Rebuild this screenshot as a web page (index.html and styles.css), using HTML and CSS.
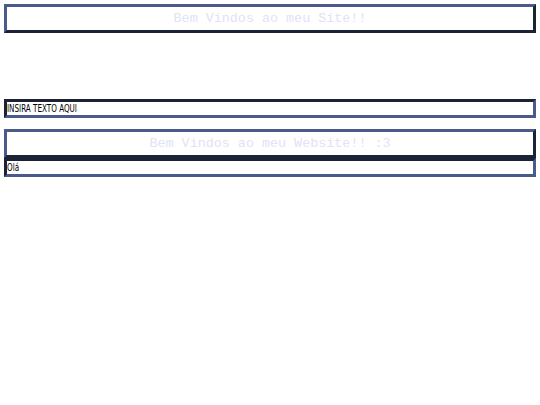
FILE: index.html
```html
<!DOCTYPE html>
<html>
<head>
<meta charset="utf-8">
<link rel="stylesheet" href="styles.css">
</head>
<body>
<div class="title">Bem Vindos ao meu Site!!</div>
<div class="spacer"></div>
<div class="field"><span class="label">INSIRA TEXTO AQUI</span></div>
<div class="title second">Bem Vindos ao meu Website!! :3</div>
<div class="field"><span class="label">Olá</span></div>
</body>
</html>
```
FILE: styles.css
```css
html, body {
  margin: 0;
  padding: 0;
  background: #ffffff;
}
body {
  padding: 4px;
}
.title {
  border: 3px outset #4a5a8a;
  height: 23px;
  line-height: 23px;
  text-align: center;
  font-family: "Liberation Mono", "DejaVu Sans Mono", monospace;
  font-size: 13.4px;
  color: #e2e2f6;
}
.spacer {
  height: 66px;
}
.field {
  border: 3px inset #4a5a8a;
  height: 13px;
  line-height: 14px;
  font-family: "DejaVu Sans Condensed", "DejaVu Sans", sans-serif;
  font-size: 10px;
  color: #000;
}
.label {
  display: inline-block;
  transform: scaleX(0.8);
  transform-origin: left center;
}
.second {
  margin-top: 11px;
}
```
